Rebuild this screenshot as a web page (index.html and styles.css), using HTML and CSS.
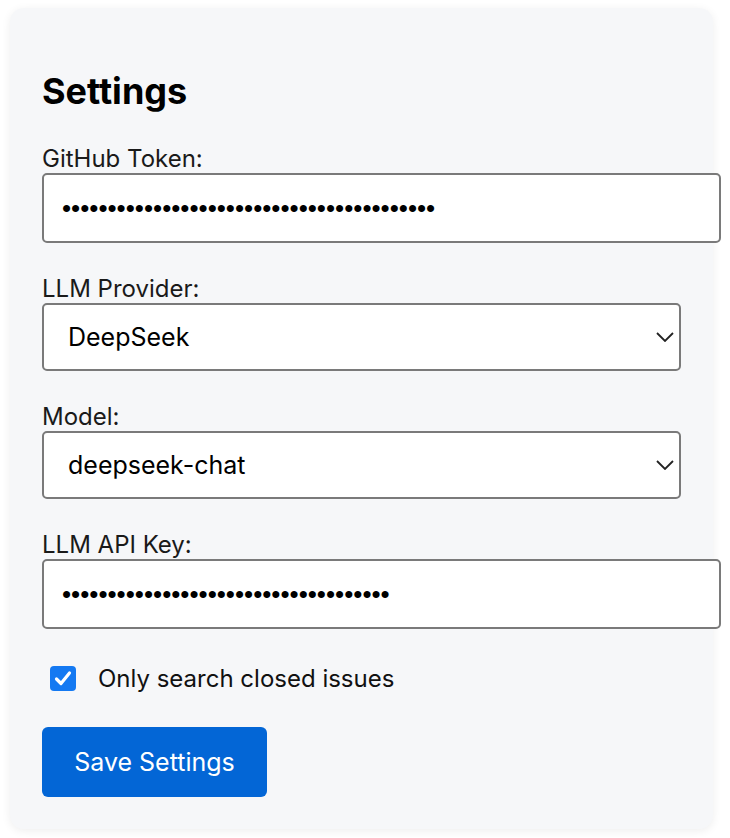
FILE: index.html
```html
<!DOCTYPE html>
<html lang="en">
<head>
<meta charset="utf-8">
<title>Settings</title>
<link rel="stylesheet" href="styles.css">
</head>
<body>
<div class="card">
  <h2 class="title">Settings</h2>
  <div class="field">
    <label class="label" for="token">GitHub Token:</label>
    <input class="text-input" id="token" type="password" value="ghp_abcdefghijklmnopqrstuvwxyz01234567890">
  </div>
  <div class="field">
    <label class="label" for="provider">LLM Provider:</label>
    <div class="select-wrap">
      <select class="select" id="provider"><option>DeepSeek</option></select>
      <svg class="chevron" width="18" height="10" viewBox="0 0 18 10"><path d="M1 1 L9 9 L17 1" fill="none" stroke="#222" stroke-width="1.8"/></svg>
    </div>
  </div>
  <div class="field">
    <label class="label" for="model">Model:</label>
    <div class="select-wrap">
      <select class="select" id="model"><option>deepseek-chat</option></select>
      <svg class="chevron" width="18" height="10" viewBox="0 0 18 10"><path d="M1 1 L9 9 L17 1" fill="none" stroke="#222" stroke-width="1.8"/></svg>
    </div>
  </div>
  <div class="field">
    <label class="label" for="apikey">LLM API Key:</label>
    <input class="text-input" id="apikey" type="password" value="sk-abcdefghijklmnopqrstuvwxyz0123456">
  </div>
  <label class="check-row">
    <span class="checkbox"><svg width="26" height="25" viewBox="0 0 26 25"><rect x="0" y="0" width="26" height="25" rx="4" fill="#1479f2"/><path d="M6.5 13 L11 17.5 L19.5 7" fill="none" stroke="#fff" stroke-width="3.2" stroke-linecap="round" stroke-linejoin="round"/></svg></span>
    <span class="check-text">Only search closed issues</span>
  </label>
  <button class="save" type="button">Save Settings</button>
</div>
</body>
</html>
```
FILE: styles.css
```css
html, body {
  margin: 0;
  background: #ffffff;
}
body {
  padding: 8px 17px 8px 10px;
  font-family: Inter, "Liberation Sans", sans-serif;
  color: #111;
}
.card {
  width: 703px;
  box-sizing: border-box;
  padding: 32px;
  background: #f6f7f9;
  border-radius: 14px;
  box-shadow: 0 2px 10px rgba(0, 0, 0, 0.07);
}
.title {
  margin: 29px 0 31px;
  font-size: 36px;
  line-height: 44px;
  font-weight: 700;
  color: #000;
}
.field {
  margin-bottom: 31px;
}
.label {
  display: block;
  font-size: 24px;
  line-height: 29px;
  color: #1a1a1a;
}
.text-input {
  width: 100%;
  height: 66px;
  padding: 0 18px;
  margin: 0;
  border: 2px solid #7a7a7a;
  border-radius: 5px;
  background: #fff;
  font-family: "Liberation Sans", Arial, sans-serif;
  font-size: 26px;
  color: #000;
  outline: none;
}
.select-wrap {
  position: relative;
}
.select {
  -webkit-appearance: none;
  appearance: none;
  display: block;
  width: 100%;
  height: 68px;
  box-sizing: border-box;
  padding: 0 40px 0 24px;
  margin: 0;
  border: 2px solid #7a7a7a;
  border-radius: 5px;
  background: #fff;
  font-family: inherit;
  font-size: 25px;
  color: #000;
  outline: none;
}
.chevron {
  position: absolute;
  right: 7px;
  top: 29px;
  pointer-events: none;
}
.check-row {
  display: flex;
  align-items: center;
  margin-top: 35px;
  height: 29px;
}
.checkbox {
  display: block;
  width: 26px;
  height: 25px;
  margin-left: 8px;
  margin-right: 22px;
}
.checkbox svg {
  display: block;
}
.check-text {
  font-size: 24px;
  line-height: 29px;
  color: #111;
}
.save {
  display: block;
  margin-top: 34px;
  width: 225px;
  height: 70px;
  padding: 0;
  border: none;
  border-radius: 6px;
  background: #0366d6;
  color: #fff;
  font-family: inherit;
  font-size: 25px;
}
```
